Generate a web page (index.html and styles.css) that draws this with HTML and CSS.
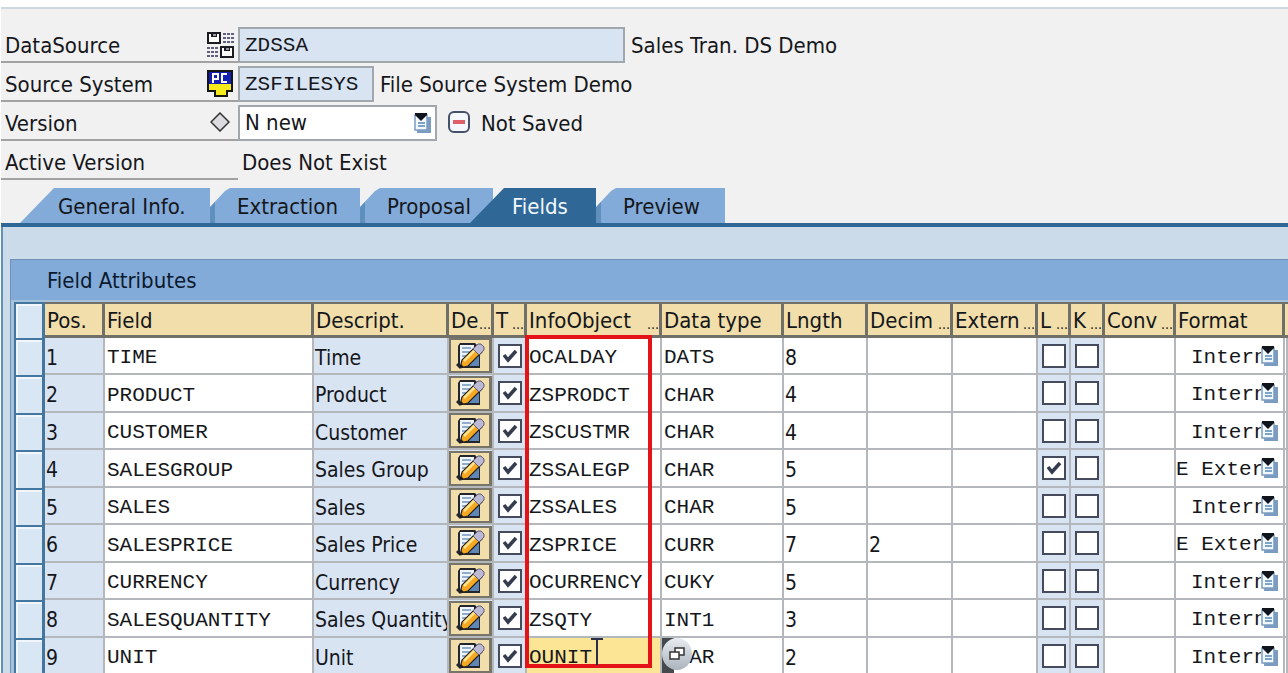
FILE: index.html
```html
<!DOCTYPE html>
<html lang="en">
<head>
<meta charset="utf-8">
<title>DataSource ZDSSA</title>
<link rel="stylesheet" href="styles.css">
</head>
<body>
<svg class="defs" aria-hidden="true">
  <symbol id="i-source" viewBox="0 0 28 27">
    <g fill="#fff" stroke="#1b1b22" stroke-width="2"><rect x="2" y="2" width="12" height="10"/><rect x="15" y="16" width="12" height="10"/></g>
    <path d="M5 3h6v3h-6zM18 17h6v3h-6z" fill="#1b1b22"/>
    <path d="M7 3h3v2h-3zM20 17h3v2h-3z" fill="#99a"/>
    <path d="M17 3h11M17 7h11M17 11h11M1 17h11M1 21h11M1 25h11" stroke="#33305a" stroke-width="1.500" stroke-dasharray="3 1"/>
  </symbol>
  <symbol id="i-pc" viewBox="0 0 26 27">
    <path d="M1 1h24v20h-5v5H8v-5H1z" fill="#f7ea1a" stroke="#151515" stroke-width="2"/>
    <path d="M2 2h22v12H2z" fill="#1420b4"/>
    <path d="M6 13V4h5v5H6M20 4h-5v8h5" fill="none" stroke="#fff" stroke-width="2"/>
  </symbol>
  <symbol id="i-diamond" viewBox="0 0 20 20">
    <path d="M10 1l9 9-9 9-9-9z" fill="#dcdce0" stroke="#333" stroke-width="1.500"/>
  </symbol>
  <symbol id="i-list" viewBox="0 0 17 20">
    <path d="M4 4h13v16H3z" fill="#7b9cc0"/>
    <path d="M1 2h12v15H1z" fill="#f3f8fd" stroke="#7b9cc0" stroke-width="1.500"/>
    <path d="M4 10h7M4 13h7" stroke="#5788b8" stroke-width="1.500"/>
    <path d="M1 0h12v2L7 8 1 2z" fill="#10141c"/>
  </symbol>
  <symbol id="i-unsaved" viewBox="0 0 22 22">
    <rect x="1" y="1" width="20" height="20" rx="5" fill="#f4f8fd" stroke="#46506a" stroke-width="2"/>
    <path d="M5 11h12" stroke="#e0606a" stroke-width="4"/>
  </symbol>
  <symbol id="i-edit" viewBox="0 0 30 28">
    <path d="M3 4l2-3h15l5 5v20H4L1 23l2-2z" fill="#23252c"/>
    <path d="M5 3h14v20H5z" fill="#f0f5fb"/>
    <path d="M17 12l7-4v16H10z" fill="#5f86b4"/>
    <path d="M7 6h9M7 10h8M7 14h5M7 18h2" stroke="#7195bf" stroke-width="1.500"/>
    <path d="M5 26l2-8L21 4l6 6-14 14z" fill="#f6a823" stroke="#222" stroke-width="1.200"/>
    <path d="M9 19L21 7" stroke="#ffe28a" stroke-width="2.500"/>
    <path d="M18 7l5-5h3l3 3v3l-5 5z" fill="#bcb9d2" stroke="#5d5a78"/>
    <path d="M5 26l1-4 3 3z" fill="#1d1d1d"/>
  </symbol>
  <symbol id="i-windows" viewBox="0 0 16 14">
    <path d="M6 1h9v7H6z" fill="#fff" stroke="#333" stroke-width="1.500"/>
    <path d="M1 5h9v7H1z" fill="#fff" stroke="#333" stroke-width="1.500"/>
  </symbol>
</svg>

<main class="page">
  <form class="head">
    <div class="row">
      <label class="label" for="ds">DataSource</label>
      <span class="mark"><svg class="mark-icon"><use href="#i-source"/></svg></span>
      <input class="box box-long" id="ds" value="ZDSSA" readonly>
      <span class="note">Sales Tran. DS Demo</span>
    </div>
    <div class="row">
      <label class="label" for="sys">Source System</label>
      <span class="mark"><svg class="mark-icon"><use href="#i-pc"/></svg></span>
      <input class="box box-short" id="sys" value="ZSFILESYS" readonly>
      <span class="note">File Source System Demo</span>
    </div>
    <div class="row">
      <label class="label" for="ver">Version</label>
      <span class="mark"><svg class="mark-small"><use href="#i-diamond"/></svg></span>
      <span class="pick">
        <select class="box box-pick" id="ver"><option>N new</option></select>
        <svg class="pick-icon"><use href="#i-list"/></svg>
      </span>
      <svg class="state"><use href="#i-unsaved"/></svg>
      <span class="state-text">Not Saved</span>
    </div>
    <div class="row">
      <span class="label">Active Version</span>
      <span class="mark"></span>
      <span class="plain">Does Not Exist</span>
    </div>
  </form>

  <nav class="tabs" role="tablist">
    <button class="tab tab-first" role="tab">General Info.</button>
    <button class="tab tab-extraction" role="tab">Extraction</button>
    <button class="tab tab-proposal" role="tab">Proposal</button>
    <button class="tab tab-active" role="tab" aria-selected="true">Fields</button>
    <button class="tab tab-preview" role="tab">Preview</button>
  </nav>

  <section class="panel">
    <div class="group">
      <h2 class="title">Field Attributes</h2>
      <div class="grid">
        <table class="fields">
          <colgroup>
            <col class="c-sel"><col class="c-pos"><col class="c-field"><col class="c-desc"><col class="c-edit"><col class="c-t"><col class="c-info"><col class="c-type"><col class="c-len"><col class="c-dec"><col class="c-ext"><col class="c-l"><col class="c-k"><col class="c-conv"><col class="c-format"><col>
          </colgroup>
          <thead>
            <tr>
              <th class="sel"></th>
              <th>Pos.</th>
              <th>Field</th>
              <th>Descript.</th>
              <th><div class="cut">De<span class="dots">...</span></div></th>
              <th><div class="cut">T<span class="dots">...</span></div></th>
              <th><div class="cut">InfoObject<span class="dots">...</span></div></th>
              <th>Data type</th>
              <th>Lngth</th>
              <th><div class="cut">Decim<span class="dots">...</span></div></th>
              <th><div class="cut">Extern<span class="dots">...</span></div></th>
              <th><div class="cut">L<span class="dots">...</span></div></th>
              <th><div class="cut">K<span class="dots">...</span></div></th>
              <th><div class="cut">Conv<span class="dots">...</span></div></th>
              <th>Format</th>
              <th class="rest"></th>
            </tr>
          </thead>
          <tbody id="rows"></tbody>
        </table>
        <div class="frame"></div>
        <svg class="caret" viewBox="0 0 12 28"><path d="M0 1h12M6 1v26" stroke="#2c3046" stroke-width="2"/></svg>
        <div class="lookup"><button class="lookup-button" aria-label="Value help"><svg class="lookup-icon"><use href="#i-windows"/></svg></button></div>
      </div>
    </div>
  </section>
</main>
<script src="app.js"></script>
</body>
</html>
```
FILE: styles.css
```css
* { box-sizing: border-box; }

body {
  margin: 0;
  height: 100vh;
  overflow: hidden;
  background: #f1f1f1;
  color: #15171b;
  font: 22px/26px "DejaVu Sans Condensed", "DejaVu Sans", sans-serif;
}

.defs { display: none; }

button, input, select { font: inherit; color: inherit; margin: 0; padding: 0; border: 0; border-radius: 0; }
input, select { appearance: none; background: transparent; outline: 0; }

.page {
  display: flex;
  flex-direction: column;
  height: 100%;
  border-left: 1px solid #fff;
}

.head {
  border-top: 2px solid #cfd8df;
  margin-top: 7px;
  padding-top: 15px;
  background: #f1f1f1;
  box-shadow: 0 -7px 0 #fff;
}

.row { display: flex; align-items: flex-end; height: 39px; }

.label, .mark { height: 36px; border-bottom: 2px solid #a2a2a2; }
.label { width: 200px; padding: 6px 0 0 4px; }
.mark { display: flex; align-items: center; justify-content: center; width: 37px; }
.mark-icon { width: 28px; height: 27px; }
.mark-small { width: 20px; height: 20px; }

.box {
  height: 36px;
  padding: 0 5px;
  border: 2px solid #a2a7ad;
  background: #d9e4f3;
  font-family: "Liberation Mono", monospace;
  font-size: 21px;
}
.box-long { width: 387px; }
.box-short { width: 136px; }
.box-pick { width: 199px; background: #fff; font-family: "DejaVu Sans Condensed", "DejaVu Sans", sans-serif; font-size: 22px; }
.note { padding: 0 6px 4px; }
.plain { padding: 0 4px 4px; }
.pick { display: grid; }
.pick > * { grid-area: 1 / 1; }
.pick-icon { width: 17px; height: 20px; margin-right: 6px; justify-self: end; align-self: center; pointer-events: none; }
.state { width: 22px; height: 22px; margin: 0 11px 8px; }
.state-text { padding-bottom: 4px; }

.tabs { display: flex; margin-top: 8px; border-bottom: 4px solid #2f6897; }
.tab {
  height: 35px;
  padding-top: 2px;
  text-align: left;
  background: linear-gradient(90deg, #5f8fbd 5px, #83abd9 5px);
  clip-path: polygon(0 19px, 15px 3px, 20px 0, 100% 0, 100% 100%, 0 100%);
}
.tab-first {
  width: 190px;
  margin-left: 19px;
  padding-left: 38px;
  background: #83abd9;
  clip-path: polygon(0 100%, 34px 0, 100% 0, 100% 100%);
}
.tab-extraction { width: 150px; padding-left: 27px; }
.tab-proposal { width: 133px; padding-left: 27px; }
.tab-active {
  width: 126px;
  margin-left: -23px;
  padding-left: 42px;
  background: #2f6897;
  color: #f2f8ff;
  clip-path: polygon(0 100%, 34px 0, 100% 0, 100% 100%);
}
.tab-preview { width: 129px; padding-left: 27px; }

.panel {
  flex: 1;
  min-height: 0;
  overflow: hidden;
  padding: 32px 0 0 7px;
  border-left: 2px solid #5d93b8;
  background: #cbdbea;
}

.group { border: solid #7092b5; border-width: 1px 0 0 1px; background: #a6c2da; }
.title {
  margin: 0;
  height: 40px;
  padding: 8px 36px;
  background: #83abd9;
  font: inherit;
  color: #0b1a2e;
}

.grid { position: relative; margin-left: 3px; padding-top: 2px; }
.fields { width: 100%; table-layout: fixed; border-spacing: 0; }

.c-sel { width: 31px; }
.c-pos { width: 60px; }
.c-field { width: 209px; }
.c-desc { width: 135px; }
.c-edit { width: 45px; }
.c-t { width: 33px; }
.c-info { width: 135px; }
.c-type { width: 122px; }
.c-len { width: 84px; }
.c-dec { width: 85px; }
.c-ext { width: 85px; }
.c-l { width: 33px; }
.c-k { width: 34px; }
.c-conv { width: 71px; }
.c-format { width: 109px; }

th {
  height: 36px;
  padding: 2px 0 0 2px;
  border: solid #707068;
  border-width: 2px 3px 3px 0;
  background: #f1deaa;
  font-weight: normal;
  text-align: left;
  white-space: nowrap;
  overflow: hidden;
}
th.rest { border-right: 0; }
.cut { display: flex; justify-content: space-between; align-items: flex-end; }
.dots { font-size: 14px; line-height: 20px; }

td {
  height: 37px;
  padding: 0;
  border: solid #b4b8bc;
  border-width: 0 2px 2px 0;
  background: #fff;
  font-size: 21px;
  white-space: nowrap;
  overflow: hidden;
}
tbody tr:nth-child(even) td { height: 38px; }
.sel, tbody tr .sel { border: solid #44779f; border-width: 2px 3px 0 2px; background: #d9e6f4; box-shadow: inset 2px 2px 0 #f0f6fc; }
.ro { background: #d9e4f3; }
.ro-text { padding: 4px 0 0 1px; }

.entry {
  display: block;
  width: 100%;
  height: 35px;
  padding: 4px 0 0 2px;
  font-family: "Liberation Mono", monospace;
}
.entry-plain { font-family: "DejaVu Sans Condensed", "DejaVu Sans", sans-serif; padding-left: 1px; }
.current { background: #fde596; }

.edit {
  display: grid;
  place-items: center;
  width: 100%;
  height: 35px;
  border: solid #77756a;
  border-width: 2px 3px 2px 2px;
  background: #f1deaa;
}
.edit-icon { width: 30px; height: 28px; }

.check { display: block; width: 24px; height: 24px; border: 2px solid #454a5c; background: #fff; }
.tick { display: grid; justify-items: center; align-items: center; }
.tick > * { grid-area: 1 / 1; }
.tick-mark { width: 16px; height: 14px; pointer-events: none; }

.format { display: flex; align-items: center; }
.format-pick { flex: 1; width: 0; padding-top: 4px; font-family: "Liberation Mono", monospace; overflow: hidden; }
.format-pick.internal { padding-left: 15px; }
.format-icon { width: 17px; height: 20px; margin-right: 5px; pointer-events: none; }

.frame { position: absolute; top: 35px; left: 511px; width: 127px; height: 333px; border: 4px solid #e31318; pointer-events: none; }
.caret { position: absolute; top: 338px; left: 577px; width: 12px; height: 28px; }
.lookup { position: absolute; top: 338px; left: 648px; width: 12px; height: 36px; background: #45484c; }
.lookup-button {
  display: grid;
  place-items: center;
  width: 30px;
  height: 32px;
  border-radius: 50%;
  background: linear-gradient(#e8ecf0, #aab3bd);
}
.lookup-icon { width: 16px; height: 14px; }
```
FILE: app.js
```js
const fields = [
  ["TIME", "Time", "OCALDAY", "DATS", "8", "", false, "Internal"],
  ["PRODUCT", "Product", "ZSPRODCT", "CHAR", "4", "", false, "Internal"],
  ["CUSTOMER", "Customer", "ZSCUSTMR", "CHAR", "4", "", false, "Internal"],
  ["SALESGROUP", "Sales Group", "ZSSALEGP", "CHAR", "5", "", true, "E External"],
  ["SALES", "Sales", "ZSSALES", "CHAR", "5", "", false, "Internal"],
  ["SALESPRICE", "Sales Price", "ZSPRICE", "CURR", "7", "2", false, "E External"],
  ["CURRENCY", "Currency", "OCURRENCY", "CUKY", "5", "", false, "Internal"],
  ["SALESQUANTITY", "Sales Quantity", "ZSQTY", "INT1", "3", "", false, "Internal"],
  ["UNIT", "Unit", "OUNIT", "CHAR", "2", "", false, "Internal"]
];

const entry = (name, value, extra = "") =>
  `<td><input class="entry ${extra}" aria-label="${name}" value="${value}"></td>`;

const check = (name, on) =>
  `<td class="ro"><div class="tick"><input class="check" type="checkbox" aria-label="${name}"${on ? " checked" : ""}>` +
  (on ? `<svg class="tick-mark" viewBox="0 0 16 14"><path d="M2 6l4 5 8-9" fill="none" stroke="#363c50" stroke-width="3.500"/></svg>` : "") +
  `</div></td>`;

document.getElementById("rows").innerHTML = fields.map((f, i) => `<tr>
  <td class="sel"></td>
  <td class="ro ro-text">${i + 1}</td>
  ${entry("Field", f[0])}
  <td class="ro ro-text">${f[1]}</td>
  <td class="ro"><button class="edit" aria-label="Edit ${f[1]}"><svg class="edit-icon"><use href="#i-edit"/></svg></button></td>
  ${check("Transfer", true)}
  ${entry("InfoObject", f[2], i === 8 ? "current" : "")}
  ${entry("Data type", f[3])}
  ${entry("Length", f[4], "entry-plain")}
  ${entry("Decimals", f[5], "entry-plain")}
  ${entry("External length", "")}
  ${check("Lowercase", f[6])}
  ${check("Key", false)}
  ${entry("Conversion", "")}
  <td><div class="format"><select class="format-pick ${f[7] === "Internal" ? "internal" : ""}" aria-label="Format"><option>${f[7]}</option></select><svg class="format-icon"><use href="#i-list"/></svg></div></td>
  <td></td>
</tr>`).join("");
```
